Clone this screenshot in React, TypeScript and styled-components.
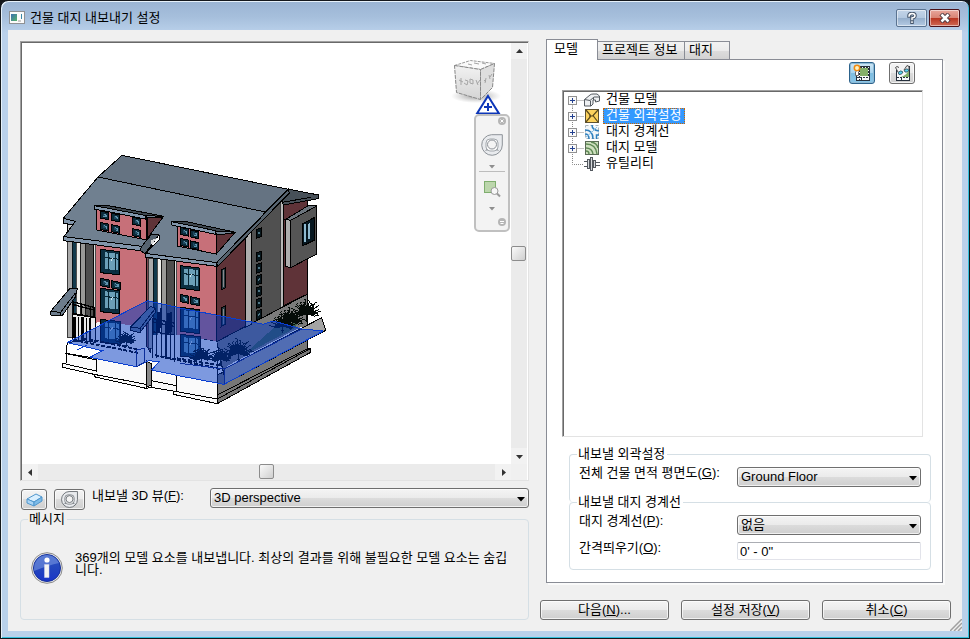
import React from "react";
import styled, { createGlobalStyle, css } from "styled-components";

const GlobalStyle = createGlobalStyle`
  *, *::before, *::after { box-sizing: border-box; }
  html, body { margin: 0; background: #14181c; }
  body, button, select, input {
    font-family: "Liberation Sans", "Noto Sans CJK KR", sans-serif;
    font-size: 13px;
    line-height: 16px;
    color: #000;
  }
  svg { display: block; }
  button { padding: 0; margin: 0; }
`;

const bevel = css`
  border: 1px solid #6f6f6f;
  border-radius: 3px;
  background: linear-gradient(#f4f4f4 0%, #ebebeb 48%, #dcdcdc 50%, #cfcfcf 100%);
  box-shadow: inset 0 0 0 1px rgba(255, 255, 255, 0.7);
`;

/* ---------- window frame ---------- */

const Frame = styled.div`
  display: flex;
  flex-direction: column;
  min-height: 100vh;
  padding: 0 6px 7px;
  border: 1px solid #14181c;
  border-radius: 8px 8px 0 0;
  background: linear-gradient(#9ab4d3 0px, #a6bfdc 16px, #bad1eb 32px, #b9d1ea 100%);
  box-shadow: inset 1px 1px 0 #e6f1fa, inset -1px -1px 0 #35c0dc;
`;

const TitleBar = styled.header`
  display: flex;
  align-items: center;
  height: 29px;
  padding: 4px 3px 0 2px;
`;

const Title = styled.h1`
  flex: 1;
  margin: 0 0 0 5px;
  font-size: 13px;
  font-weight: 400;
  line-height: 16px;
`;

const CaptionButton = styled.button<{ $close?: boolean }>`
  display: grid;
  place-items: center;
  width: 31px;
  height: 18px;
  margin: 0 0 0 2px;
  border: 1px solid ${(p) => (p.$close ? "#4b1219" : "#5a7391")};
  border-radius: 2px;
  background: ${(p) =>
    p.$close
      ? "linear-gradient(#e8a79c 0%, #d98474 48%, #b8341f 50%, #cf6a55 100%)"
      : "linear-gradient(#c3d4e8 0%, #b3c8e0 48%, #94aecb 50%, #b4cae3 100%)"};
  box-shadow: inset 0 0 0 1px rgba(255, 255, 255, 0.5);
`;

const Body = styled.main`
  position: relative;
  flex: 1;
  display: grid;
  grid-template-columns: 509fr 411fr;
  gap: 11px;
  margin: 0 1px;
  padding: 0 11px 11px 12px;
  background: #f0f0f0;
`;

const Column = styled.section<{ $top: number }>`
  display: flex;
  flex-direction: column;
  min-width: 0;
  padding-top: ${(p) => p.$top}px;
`;

const Grip = styled.svg`
  position: absolute;
  right: 0;
  bottom: 0;
`;

/* ---------- 3D view ---------- */

const sunken = css`
  border: 1px solid;
  border-color: #a0a0a0 #e3e3e3 #e3e3e3 #a0a0a0;
  box-shadow: inset 1px 1px 0 #696969;
`;

const Viewer = styled.div`
  ${sunken}
  flex: 1;
  display: grid;
  grid-template-columns: 1fr 16px;
  grid-template-rows: 1fr 16px;
  padding: 1px 1px 0 1px;
  background: #fff;
`;

const Canvas = styled.div`
  position: relative;
  padding: 102px 0 0 18px;
  overflow: hidden;
`;

const NavCluster = styled.div`
  position: absolute;
  top: 15px;
  right: 0;
  display: flex;
  flex-direction: column;
  align-items: center;
  width: 64px;
`;

const NavBar = styled.div`
  display: flex;
  flex-direction: column;
  align-items: center;
  align-self: flex-end;
  width: 36px;
  height: 118px;
  margin: 0 1px 0 0;
  border: 2px solid #c0c0c0;
  border-radius: 5px;
  background: #f3f3f3;
`;

const NavButton = styled.button<{ $h: number; $end?: boolean }>`
  display: grid;
  place-items: center;
  align-self: ${(p) => (p.$end ? "flex-end" : "center")};
  width: ${(p) => (p.$end ? 12 : 26)}px;
  height: ${(p) => p.$h}px;
  border: 0;
  background: none;
`;

const NavRule = styled.hr`
  width: 26px;
  height: 1px;
  margin: 1px 0 2px;
  border: 0;
  background: #bdbdbd;
`;

const Track = styled.div<{ $vertical?: boolean }>`
  display: flex;
  flex-direction: ${(p) => (p.$vertical ? "column" : "row")};
  align-items: stretch;
  background: #ebebeb;
`;

const TrackSpace = styled.div<{ $grow: number }>`
  flex: ${(p) => p.$grow} 1 0;
`;

const TrackButton = styled.button`
  display: grid;
  place-items: center;
  width: 16px;
  height: 16px;
  border: 0;
  background: #f2f2f2;
`;

const Thumb = styled.div`
  width: 15px;
  height: 15px;
  border: 1px solid #8c8c8c;
  border-radius: 2px;
  background: linear-gradient(135deg, #fafafa, #cfcfcf);
`;

const Corner = styled.div`
  background: #f0f0f0;
`;

const ViewRow = styled.div`
  display: flex;
  align-items: flex-start;
  height: 21px;
  margin-top: 7px;
  padding-left: 1px;
`;

const SmallButton = styled.button<{ $w: number }>`
  ${bevel}
  display: grid;
  place-items: center;
  width: ${(p) => p.$w}px;
  height: 21px;
  margin: 1px 7px 0 0;
`;

const ViewLabel = styled.label`
  width: 118px;
`;

/* ---------- form parts ---------- */

const SelectBox = styled.div`
  position: relative;
  flex: 1;
  display: flex;
  min-width: 0;
`;

const Select = styled.select`
  ${bevel}
  appearance: none;
  width: 100%;
  height: 20px;
  margin: 0;
  padding: 0 20px 0 3px;
  line-height: 16px;
`;

const SelectArrow = styled.svg`
  position: absolute;
  right: 4px;
  top: 9px;
  pointer-events: none;
`;

const TextInput = styled.input`
  width: 100%;
  height: 18px;
  padding: 0 2px;
  border: 1px solid;
  border-color: #abadb3 #e2e3ea #e2e3ea #dbdfe6;
  border-radius: 2px;
  background: #fff;
`;

const Group = styled.fieldset<{ $open?: boolean; $joined?: boolean }>`
  min-width: 0;
  margin: ${(p) => (p.$joined ? "-8px" : "0")} 0 0;
  padding: 0 9px ${(p) => (p.$open ? 15 : 9)}px;
  border: 1px solid #d5dfe5;
  border-bottom-width: ${(p) => (p.$open ? 0 : 1)}px;
  border-radius: 4px;
`;

const Legend = styled.legend`
  height: 16px;
  margin-left: -2px;
  padding: 0 2px 0 1px;
  line-height: 16px;
`;

const Fields = styled.div`
  display: grid;
  grid-template-columns: 158px 1fr;
  row-gap: 7px;
  padding-top: 5px;
`;

const FieldLabel = styled.label`
  line-height: 12px;
`;

const MessageGroup = styled(Group)`
  height: 109px;
  margin-top: 2px;
`;

const Message = styled.div`
  display: flex;
  align-items: flex-start;
  gap: 12px;
  padding: 25px 6px 0 1px;
`;

const MessageText = styled.p`
  flex: 1;
  margin: 0;
  line-height: 12px;
  word-break: break-all;
`;

/* ---------- settings side ---------- */

const TabArea = styled.div`
  flex: 1;
  display: flex;
  flex-direction: column;
  padding: 0 8px 0 6px;
`;

const TabList = styled.div`
  display: flex;
  align-items: flex-end;
  height: 21px;
`;

const Tab = styled.button<{ $active?: boolean; $w: number }>`
  width: ${(p) => p.$w}px;
  height: ${(p) => (p.$active ? 21 : 19)}px;
  padding: 0 0 2px ${(p) => (p.$active ? 7 : 4)}px;
  border: 1px solid #898c95;
  border-left-width: ${(p) => (p.$active ? 1 : 0)}px;
  border-bottom: ${(p) => (p.$active ? "0" : "1px solid #898c95")};
  background: ${(p) =>
    p.$active ? "#fff" : "linear-gradient(#f2f2f2 0%, #ebebeb 50%, #dddddd 52%, #d2d2d2 100%)"};
  text-align: left;
  white-space: nowrap;
  z-index: 1;
`;

const Panel = styled.div`
  flex: 1;
  display: flex;
  flex-direction: column;
  margin-top: -1px;
  padding: 2px 11px 12px 15px;
  border: 1px solid #898c95;
  background: #fff;
  box-shadow: 2px 2px 0 #fafafa;
`;

const Toolbar = styled.div`
  display: flex;
  justify-content: flex-end;
  gap: 14px;
  margin-bottom: 6px;
  padding-right: 16px;
`;

const ToolButton = styled.button<{ $on?: boolean }>`
  ${bevel}
  display: grid;
  place-items: center;
  width: 26px;
  height: 22px;
  ${(p) =>
    p.$on &&
    css`
      border-color: #2c628b;
      background: linear-gradient(#cfe7f6 0%, #a9d4ee 48%, #7dbde1 50%, #8ac6e8 100%);
      box-shadow: inset 0 0 0 1px #8ebbd6;
    `}
`;

const Tree = styled.ul`
  ${sunken}
  flex: 1;
  margin: 0 8px 9px 0;
  padding: 1px 0 0 4px;
  list-style: none;
`;

const TreeRow = styled.li`
  display: flex;
  align-items: center;
  height: 16px;
`;

const TreeLabel = styled.span<{ $selected?: boolean }>`
  height: 16px;
  margin-left: 3px;
  padding: 0 3px 0 2px;
  line-height: 12px;
  border: 1px dotted ${(p) => (p.$selected ? "#cc6600" : "transparent")};
  background: ${(p) => (p.$selected ? "#3399ff" : "transparent")};
  color: ${(p) => (p.$selected ? "#fff" : "#000")};
`;

const GroupStack = styled.div`
  margin-left: 7px;
`;

const Actions = styled.div`
  display: grid;
  grid-template-columns: repeat(3, 1fr);
  gap: 12px;
  margin-top: 17px;
`;

const ActionButton = styled.button`
  ${bevel}
  height: 20px;
  line-height: 16px;
`;

/* ---------- icons ---------- */

const AppIcon = () => (
  <svg width="16" height="14" viewBox="0 0 16 14" aria-hidden="true">
    <defs>
      <linearGradient id="app" x1="0" y1="0" x2="1" y2="1">
        <stop offset="0" stopColor="#3a6fb0" />
        <stop offset="1" stopColor="#57b36a" />
      </linearGradient>
    </defs>
    <rect x=".5" y=".5" width="15" height="12" fill="#fbfbfb" stroke="#8f9193" />
    <rect x="2" y="3" width="6" height="7" fill="url(#app)" />
    <rect x="9" y="9" width="3" height="2" fill="#ccc" />
    <rect x="12" y="3" width="1" height="5" fill="#3a8aa8" />
  </svg>
);

const Ring = ({ size = 22, dark }: { size?: number; dark?: boolean }) => (
  <svg width={size} height={size} viewBox="0 0 22 22" fill="none" stroke={dark ? "#50565d" : "#8d9298"} aria-hidden="true">
    <path d="M10.500.7H21.300V11A10.300 10.300 0 1 1 10.500.7Z" fill="#e9ebee" />
    <rect x="5" y="5" width="12" height="12" rx="4" fill="#f8f8f8" stroke={dark ? "#6b7178" : "#a3a8ad"} />
    <circle cx="11" cy="10.500" r="4.500" fill="#f4f4f4" />
    <path d="m4.500 17 2-2m11 2-2-2" />
  </svg>
);

const RegionZoom = () => (
  <svg width="18" height="18" viewBox="0 0 18 18" aria-hidden="true">
    <rect x="1.500" y="1.500" width="11" height="11" fill="#bcd6ac" stroke="#7fae6e" />
    <circle cx="11.500" cy="11" r="3.500" fill="#f7f7f7" stroke="#999" />
    <path d="m14 13.500 3 3" stroke="#999" strokeWidth="2" />
  </svg>
);

const Caret = ({ dir, color = "#333" }: { dir: "up" | "down" | "left" | "right"; color?: string }) => {
  const d = {
    up: "M1 6 4.500 2 8 6Z",
    down: "M1 3 8 3 4.500 7Z",
    left: "M6 1 2 4.500 6 8Z",
    right: "M3 1 7 4.500 3 8Z",
  }[dir];
  return (
    <svg width="9" height="9" viewBox="0 0 9 9" aria-hidden="true">
      <path d={d} fill={color} />
    </svg>
  );
};

const SmallCaret = () => (
  <svg width="6" height="4" viewBox="0 0 6 4" aria-hidden="true">
    <path d="M0 0H6L3 3.500Z" fill="#8f8f8f" />
  </svg>
);

const NavDot = ({ cross }: { cross?: boolean }) => (
  <svg width="8" height="8" viewBox="0 0 8 8" stroke="#fff" aria-hidden="true">
    <circle cx="4" cy="4" r="4" fill="#b5b5b5" stroke="none" />
    {cross ? <path d="m2.500 2.500 3 3m0-3-3 3" /> : <path d="M2 3.500h4M2.500 5.500h3" />}
  </svg>
);

const ViewCube = () => (
  <svg width="64" height="56" viewBox="447 58 64 56" aria-label="ViewCube">
    <defs>
      <radialGradient id="cubeShade">
        <stop offset="0" stopColor="#777" stopOpacity=".75" />
        <stop offset="1" stopColor="#999" stopOpacity="0" />
      </radialGradient>
      <linearGradient id="cubeFace" x1="0" y1="0" x2="0" y2="1">
        <stop offset="0" stopColor="#f2f2f2" />
        <stop offset="1" stopColor="#d4d4d4" />
      </linearGradient>
    </defs>
    <ellipse cx="476" cy="96" rx="25" ry="7" fill="url(#cubeShade)" />
    <path d="m454.500 65.500 16-5 24 3-14 6Z" fill="#fafafa" stroke="#999" strokeDasharray="3 1" />
    <path d="m454.500 65.500 26 4v30l-24-7Z" fill="url(#cubeFace)" stroke="#888" strokeDasharray="4 1" />
    <path d="m480.500 69.500 14-6-2 24-12 12Z" fill="#dedede" stroke="#888" strokeDasharray="4 1" />
    <path
      d="m459 80 4 2m-2-4v7m4-5 3 1-1 4-3-2m6-4 3 1v4l-3-1zm6 1 2 5m2-5-3 4m7-4 2 2m0-4-1 5m4-8 1 4m2-5-2 3M468 64l4 1m2-2 5 1m3-1 4 1"
      fill="none"
      stroke="#a5a5a5"
    />
    <path d="M488 96 499 113.500H477Z" fill="#fff" stroke="#0d36b8" strokeWidth="2" />
    <path d="M476 113.500h24" stroke="#0d36b8" />
    <path d="M488 103v8m-4-4h8" stroke="#0d36b8" strokeWidth="2" />
  </svg>
);

const Block = () => (
  <svg width="17" height="14" viewBox="0 0 17 14" stroke="#4f96cd" strokeLinejoin="round" aria-hidden="true">
    <path d="m1 6 9-5 6 3-8 5Z" fill="#d9efff" />
    <path d="m1 6 7 3v4L1 10Z" fill="#a9d4f5" />
    <path d="m8 9 8-5v4l-8 5Z" fill="#7dbbe8" />
  </svg>
);

const InfoIcon = () => (
  <svg width="32" height="32" viewBox="0 0 32 32" aria-hidden="true">
    <defs>
      <linearGradient id="info" x1="0" y1="0" x2="0" y2="1">
        <stop offset="0" stopColor="#2d55c4" />
        <stop offset=".5" stopColor="#2346bd" />
        <stop offset="1" stopColor="#1a35c9" />
      </linearGradient>
    </defs>
    <circle cx="16" cy="16" r="15.300" fill="#e8e8e8" stroke="#8b8b8b" />
    <circle cx="16" cy="16" r="13.500" fill="url(#info)" stroke="#15309b" />
    <path d="M3 16A13 13 0 0 1 28 11Q18 13 3 19Z" fill="#7d9ae2" opacity=".55" />
    <circle cx="16" cy="8" r="2.600" fill="#fff" />
    <path d="M13.500 12.500h4.500v13h-4.500z" fill="#f4f4f4" stroke="#d0d5ea" strokeWidth=".5" />
  </svg>
);

const SheetIcon = ({ spark }: { spark?: boolean }) => (
  <svg width="18" height="18" viewBox="0 0 18 18" fill="none" aria-hidden="true">
    <rect x="3.500" y="2.500" width="13" height="14" fill="#f6f8fa" stroke="#26303c" />
    {spark ? (
      <rect x="7" y="4" width="8" height="8" fill="#84b06a" />
    ) : (
      <path d="M16 6v7H8q6-2 8-7Z" fill="#84b06a" />
    )}
    {spark && <path d="M6.500 3v13M7 3.500h9M15.500 4v8" stroke="#26303c" strokeDasharray="2 1" />}
    <path d="M4 13.500h12M8.500 14v3" stroke="#26303c" strokeDasharray="2 1" />
    {spark ? (
      <>
        <circle cx="4" cy="4" r="2.700" fill="#fff3c0" stroke="#f08a12" strokeWidth="1.500" />
        <path d="M2.500 7.500v4h3v-4" fill="#fff" stroke="#6a6a6a" />
      </>
    ) : (
      <>
        <rect x="2" y="1" width="14" height="5" fill="#f2f2f2" />
        <path d="M5 8 2.500 3.500 4 2.500l2 1M11 6l3-4.500 2 1V5" stroke="#4b4b4b" />
        <path d="M5 8.500q3-3 5-.5-1 3-4 2.500ZM11 6.500q3-3 5-.5-1 3-4 2Z" fill="#54d2ee" stroke="#29323c" strokeWidth=".7" />
      </>
    )}
  </svg>
);

const Branch = ({ leaf, first }: { leaf?: boolean; first?: boolean }) => (
  <svg width="17" height="16" viewBox="0 0 17 16" fill="none" aria-hidden="true">
    <path
      d={leaf ? "M5.500 0v8.500H17" : first ? "M5.500 8.500V16M5.500 8.500H17" : "M5.500 0V16M5.500 8.500H17"}
      stroke="#888"
      strokeDasharray="1 1"
    />
    {!leaf && (
      <>
        <rect x="1.500" y="4.500" width="8" height="8" fill="#fafafa" stroke="#919191" />
        <path d="M3 8.500h5M5.500 6v5" stroke="#23408f" />
      </>
    )}
  </svg>
);

const BuildingIcon = () => (
  <svg width="16" height="14" viewBox="0 0 16 14" stroke="#555b61" strokeLinejoin="round" aria-hidden="true">
    <path d="M.5 6.500 6 2q1-1 3-1h4l2.500 2v5l-4 1V7H9v4l-2 2H.5Z" fill="#eef0f2" />
    <path d="M.5 6.500 6 7.500l4-3.500h5.500M6.500 8v5M9.500 7V5" fill="none" />
  </svg>
);
const OutlineIcon = () => (
  <svg width="16" height="16" viewBox="0 0 16 16" aria-hidden="true">
    <rect x="1.500" y="1.500" width="13" height="13" fill="#fcd25e" stroke="#5d5132" />
    <path d="m2 2 5 6-5 6M14 2 9 7.500l5 6.500M5 8h5" fill="none" stroke="#5b4a1c" strokeWidth="1.200" />
  </svg>
);
const BoundaryIcon = () => (
  <svg width="16" height="16" viewBox="0 0 16 16" fill="none" aria-hidden="true">
    <rect x="1.500" y="1.500" width="13" height="13" fill="#f3f7fa" stroke="#a9b4bd" strokeDasharray="3 2" />
    <path d="M8 1q0 5 7 6M1 6q8 0 8 9M1 10q4 0 4 5M12.500 15v-4H15" stroke="#2f7fbd" strokeWidth="1.500" />
    <path d="m2 13 6-5 5-5" stroke="#8bbfe4" />
  </svg>
);
const SiteIcon = () => (
  <svg width="16" height="16" viewBox="0 0 16 16" fill="none" aria-hidden="true">
    <rect x="1.500" y="1.500" width="13" height="13" fill="#cfe0c0" stroke="#5a6b56" />
    <path d="M2 4q10 0 11 10M2 8q6 0 7 6M2 11q3 0 3 3M7 2q6 1 7 6" stroke="#5f8a55" strokeWidth="1.400" />
  </svg>
);
const UtilityIcon = () => (
  <svg width="16" height="16" viewBox="0 0 16 16" fill="#d7dadd" stroke="#54595f" aria-hidden="true">
    <path d="M0 5.500h4M0 10.500h4M11 6.500h5M11 9.500h5" />
    <rect x="3.500" y="3.500" width="2" height="9" />
    <rect x="6.500" y="1.500" width="2" height="13" />
    <rect x="9.500" y="4.500" width="2" height="7" />
  </svg>
);

/* ---------- building drawing, three units per screen pixel ---------- */

type Pt = [number, number];

const Pane = ({ at: [x, y], w, h }: { at: Pt; w: number; h: number }) => (
  <g>
    <path d={`M${x} ${y}l${w} 5v${h}l${-w} -5Z`} fill="#0c2b3a" />
    <path d={`M${x + 8} ${y + 7}l${w - 12} 4v${h - 13}l${12 - w} -3Z`} fill="#5f93ad" stroke="none" />
    <path d={`M${x + 8} ${y + 7}v${h - 12}l9 0Z`} fill="#1f4a60" stroke="none" />
  </g>
);

const Casement = ({ at: [x, y], w, h }: { at: Pt; w: number; h: number }) => (
  <g>
    <path d={`M${x} ${y}l${w} 7v${h}l${-w} -7Z`} fill="#0b2f42" />
    <path d={`M${x + 13} ${y + 9}l${w - 18} 4v${h - 20}l${18 - w} -4Z`} fill="#6b9fb8" stroke="none" />
    <path
      d={`M${x + 24} ${y + 8}v${h - 12}M${x + 45} ${y + 10}v${h - 12}M${x + 12} ${y + 24}l${w - 14} 6`}
      fill="none"
      stroke="#082635"
    />
    <path d={`M${x + 30} ${y + h - 34}l6 -10`} stroke="#cfe6ef" fill="none" />
  </g>
);

const Shrub = ({ at: [x, y], r }: { at: Pt; r: number }) => {
  let d = "";
  for (let i = 0; i < 26; i++) {
    const a = Math.PI * (0.9 + (i * 1.2) / 25);
    const len = r * (0.6 + ((i * 7) % 5) * 0.1);
    const ex = Math.round(x + Math.cos(a) * len);
    const ey = Math.round(y + Math.sin(a) * len);
    d += `M${x} ${y}L${ex} ${ey}l${i % 2 ? 6 : -6} ${-3}M${Math.round((x + ex) / 2)} ${Math.round((y + ey) / 2)}l${
      i % 3 ? 9 : -9
    } -6`;
  }
  return <path d={d + `M${x} ${y}v${Math.round(r * 0.6)}m-5 -6h10`} fill="none" stroke="#050c08" />;
};

const Strips = ({ x, y, h }: { x: number; y: number; h: number }) => (
  <g strokeWidth="2">
    <rect x={x} y={y} width="15" height={h} fill="#aaa" />
    <rect x={x + 15} y={y} width="12" height={h} fill="#123a4c" />
    <rect x={x + 27} y={y} width="13" height={h} fill="#f0f0ec" />
    <rect x={x + 40} y={y} width="13" height={h} fill="#9a9a98" />
    <rect x={x + 53} y={y} width="26" height={h} fill="#4e4e4e" />
    <rect x={x + 79} y={y} width="6" height={h} fill="#ddd" />
  </g>
);

const House = () => (
  <svg width="300" height="265" viewBox="0 0 900 795" stroke="#000" strokeWidth="3" shapeRendering="crispEdges" role="img" aria-label="3D perspective">
    {/* base and retaining walls */}
    <path d="M82 593 78 655H68V667L162 688V695L318 730 333 727 400 738V748L532 776 532 640 322 560Z" fill="#fafafa" />
    <path d="M532 690 803 560V612L812 610V622L532 776Z" fill="#777" />
    <path d="M68 655 168 678M162 688 318 718M75 625 170 645V680M318 645V730M333 680V727M318 718 333 711M400 738 532 762M333 707 410 722M410 690V738M532 720V776M532 750 800 612M532 762 812 610" fill="none" />
    <path d="M318 648 333 655V720L318 728Z" fill="#888" />
    <path d="M635 535 803 447V560L552 690 530 590Z" fill="#7b7b7b" />
    <path d="M552 672 845 518 857 556 552 718Z" fill="#a3a3a3" />
    <path d="M560 665 785 546" stroke="#fff" fill="none" />
    <path d="M610 630 760 552 775 535 720 532Z" fill="#42634d" stroke="none" />

    {/* side walls */}
    <path d="M530 360 615 270V545L530 590Z" fill="#5f3338" />
    <path d="M615 270 635 250V537L615 547Z" fill="#adadad" />
    <path d="M635 250 727 162V487L635 535Z" fill="#505050" />
    <path d="M721 168 729 164V485L721 489Z" fill="#b8b8b8" strokeWidth="2" />
    <path d="M730 176 803 165V447L730 483Z" fill="#5f3338" />
    {[250, 320, 355, 390, 425, 460, 495].map((y) => (
      <g key={y}>
        <path d={`M648 ${y + 4}l17 -6v26l-17 6Z`} fill="#07161c" />
        <path d={`M653 ${y + 12}l6 -2v6l-6 2Z`} fill="#4f7686" stroke="none" />
      </g>
    ))}
    <path d="M543 374 556 369V428L543 435ZM543 489 556 483V538L543 545Z" fill="#253940" />
    <path d="M550 376V426M550 491V537" stroke="#8a8a8a" />
    <path d="M737 223 808 180 830 183 752 226Z" fill="#6c757d" />
    <path d="M737 223 752 226V368L737 364Z" fill="#adadad" />
    <path d="M752 226 830 183V327L752 368Z" fill="#555" />
    <path d="M787 237 824 217V285L787 303Z" fill="#061720" />
    <path d="M791 239 799 235V289L791 293ZM804 238 811 234V280L804 284Z" fill="#8fb9cf" stroke="none" />

    {/* roof */}
    <path d="M690 122 836 150 834 161 730 180 725 163Z" fill="#475058" />
    <path d="M727 172 812 157" fill="none" />
    <path d="M246 31 745 133 677 201 174 96Z" fill="#657382" />
    <path d="M174 96 677 201 530 353 315 325 357 285 357 270 335 268 305 304 72 275 105 230 70 220Z" fill="#708090" />
    <path d="M70 220 105 229 98 240 70 234Z" fill="#8296ab" />
    <path d="M82 237 98 240 82 262Z" fill="#ccc" />
    <path d="M745 133 748 144 533 364 530 353Z" fill="#56636f" />

    {/* front of the left house */}
    <path d="M165 298 318 318V600L165 560Z" fill="#c77079" />
    <Strips x={82} y={288} h={290} />
    <path d="M318 318 330 330V620L318 600Z" fill="#7b4950" />
    <path d="M72 275 305 304 300 317 70 287Z" fill="#8296ab" />
    <path d="M305 304 335 268 357 270 315 325 300 317Z" fill="#56636f" />
    <path d="M333 285 351 280 335 300Z" fill="#d8d8d8" stroke="none" />
    <Casement at={[182, 313]} w={57} h={70} />
    <Pane at={[182, 400]} w={25} h={22} />
    <Pane at={[215, 407]} w={25} h={22} />
    <Casement at={[182, 430]} w={57} h={70} />
    <path d="M170 192 320 215V285L170 255Z" fill="#c77079" />
    <path d="M322 218 368 218 322 280Z" fill="#5f3338" />
    <path d="M163 182 195 180 372 214 315 212Z" fill="#3e474f" />
    <path d="M163 182 315 211V222L163 192Z" fill="#8296ab" />
    {[[180, 198], [215, 205], [277, 217], [180, 232], [215, 239], [277, 251]].map(([x, y]) => (
      <Pane key={`${x}-${y}`} at={[x, y]} w={24} h={21} />
    ))}

    {/* front of the right house */}
    <path d="M410 340 530 358V590L410 570Z" fill="#c77079" />
    <Strips x={325} y={340} h={270} />
    <path d="M315 325 530 353V364L315 336Z" fill="#8296ab" />
    <Casement at={[420, 362]} w={58} h={68} />
    <Pane at={[420, 448]} w={25} h={22} />
    <Pane at={[452, 455]} w={25} h={22} />
    <Casement at={[420, 487]} w={58} h={72} />
    <path d="M412 243 528 265V327L412 303Z" fill="#c77079" />
    <path d="M530 268 582 266 530 326Z" fill="#5f3338" />
    <path d="M395 230 430 228 587 262 527 258Z" fill="#3e474f" />
    <path d="M395 230 527 257V268L395 240Z" fill="#8296ab" />
    {[[420, 247], [452, 255], [420, 280], [452, 288]].map(([x, y]) => (
      <Pane key={`${x}-${y}`} at={[x, y]} w={24} h={21} />
    ))}

    {/* ground floor, balconies and canopies */}
    <path d="M170 530 318 545V605L290 610 165 590Z" fill="#f4f4f4" stroke="none" />
    <path d="M410 570 530 590V665L335 640V570Z" fill="#f4f4f4" stroke="none" />
    <path d="M97 508 165 518V592L97 583Z" fill="#e9e9e9" />
    <path d="M103 515V580M127 516V585M150 518V588" strokeWidth="7" />
    <path d="M115 515V585M140 518V587" />
    <path d="M97 470 165 488M97 478 165 496M97 505 165 517M100 470V510M124 475V512M152 485V518M163 485V520" fill="none" strokeWidth="4" />
    <Casement at={[182, 523]} w={60} h={68} />
    <Casement at={[420, 568]} w={60} h={65} />
    <path d="M335 520 405 535M335 530 405 545M335 560 405 570M338 520V640M350 525V640M364 525V640M378 530V642M392 530V645M404 535V650" fill="none" strokeWidth="4" />
    <path d="M355 500V560M362 490V550M385 505V565M392 500V560" fill="none" strokeWidth="7" />
    <path d="M88 432 112 430 106 456 66 513 32 510V499Z" fill="#6c7c8c" />
    <path d="M32 499 62 502 106 444M62 502V513" fill="none" />
    <path d="M332 484 346 490V502L300 563 272 556V546Z" fill="#6c7c8c" />
    <path d="M272 546 300 550 346 490M300 550V563" fill="none" />

    {/* planting */}
    <path d="M100 585 300 625M130 580 290 612M345 630 540 672M410 640 545 662" fill="none" strokeWidth="6" strokeDasharray="12 5" />
    <Shrub at={[258, 590]} r={27} />
    <Shrub at={[485, 640]} r={32} />
    <Shrub at={[542, 643]} r={32} />
    <Shrub at={[595, 625]} r={42} />
    <Shrub at={[728, 543]} r={34} />
    <Shrub at={[752, 530]} r={42} />
    <Shrub at={[800, 506]} r={42} />

    {/* selected site slab */}
    <path
      d="M322 467 420 489 670 538 700 528 785 552 850 558 552 718 420 693 335 675 357 650 325 647 290 665 150 637 187 617 82 593 210 525Z"
      fill="#0038c4"
      fillOpacity=".5"
      stroke="#0a3fd0"
    />
    <path d="M187 617 82 593 78 625 150 637Z" fill="#fff" stroke="none" />
    <path d="M82 593 78 625 150 637" fill="none" />
    <path d="M82 593 187 617 150 637M110 615 140 600M325 647 357 650 335 675" fill="none" stroke="#0a3fd0" />
    <path d="M290 615 312 610V652L290 665ZM552 672V718M552 672 785 552M420 655 552 672" fill="none" stroke="#0b2e9a" />
  </svg>
);

/* ---------- page ---------- */

const DropDown = ({ id, value }: { id: string; value: string }) => (
  <SelectBox>
    <Select id={id} defaultValue={value}>
      <option>{value}</option>
    </Select>
    <SelectArrow width="8" height="5" viewBox="0 0 8 5" aria-hidden="true">
      <path d="M0 0H8L4 4.500Z" fill="#000" />
    </SelectArrow>
  </SelectBox>
);

const treeItems = [
  { label: "건물 모델", Icon: BuildingIcon },
  { label: "건물 외곽설정", Icon: OutlineIcon, selected: true },
  { label: "대지 경계선", Icon: BoundaryIcon },
  { label: "대지 모델", Icon: SiteIcon },
  { label: "유틸리티", Icon: UtilityIcon, leaf: true },
];

export default function App() {
  return (
    <>
      <GlobalStyle />
      <Frame>
        <TitleBar>
          <AppIcon />
          <Title>건물 대지 내보내기 설정</Title>
          <CaptionButton aria-label="도움말">
            <svg width="10" height="12" viewBox="0 0 10 12" fill="none" strokeLinecap="square" aria-hidden="true">
              <path d="M2 4q0-2.500 3-2.500t3 2.300Q8 5.500 5 6v1.500M5 10v.2" stroke="#46566b" strokeWidth="3.500" />
              <path d="M2 4q0-2.500 3-2.500t3 2.300Q8 5.500 5 6v1.500M5 10v.2" stroke="#fff" strokeWidth="1.500" />
            </svg>
          </CaptionButton>
          <CaptionButton $close aria-label="닫기">
            <svg width="12" height="10" viewBox="0 0 12 10" fill="none" aria-hidden="true">
              <path d="m2 1 8 8m0-8-8 8" stroke="#4d3a42" strokeWidth="4.500" />
              <path d="m2.500 1.500 7 7m0-7-7 7" stroke="#fff" strokeWidth="2.500" />
            </svg>
          </CaptionButton>
        </TitleBar>

        <Body>
          <Column $top={11}>
            <Viewer>
              <Canvas>
                <House />
                <NavCluster>
                  <ViewCube />
                  <NavBar>
                    <NavButton $h={10} $end aria-label="닫기"><NavDot cross /></NavButton>
                    <NavButton $h={38} aria-label="탐색 휠"><Ring /></NavButton>
                    <NavButton $h={6} aria-label="휠 옵션"><SmallCaret /></NavButton>
                    <NavRule />
                    <NavButton $h={30} aria-label="영역 줌"><RegionZoom /></NavButton>
                    <NavButton $h={10} aria-label="줌 옵션"><SmallCaret /></NavButton>
                    <NavButton $h={16} $end aria-label="사용자화"><NavDot /></NavButton>
                  </NavBar>
                </NavCluster>
              </Canvas>
              <Track $vertical>
                <TrackButton aria-label="위로"><Caret dir="up" /></TrackButton>
                <TrackSpace $grow={187} />
                <Thumb />
                <TrackSpace $grow={187} />
                <TrackButton aria-label="아래로"><Caret dir="down" /></TrackButton>
              </Track>
              <Track>
                <TrackButton aria-label="왼쪽으로"><Caret dir="left" /></TrackButton>
                <TrackSpace $grow={220} />
                <Thumb />
                <TrackSpace $grow={220} />
                <TrackButton aria-label="오른쪽으로"><Caret dir="right" /></TrackButton>
              </Track>
              <Corner />
            </Viewer>

            <ViewRow>
              <SmallButton $w={26} aria-label="3D 블록"><Block /></SmallButton>
              <SmallButton $w={31} aria-label="탐색"><Ring size={17} dark /></SmallButton>
              <ViewLabel htmlFor="view">내보낼 3D 뷰(<u>F</u>):</ViewLabel>
              <DropDown id="view" value="3D perspective" />
            </ViewRow>

            <MessageGroup>
              <Legend>메시지</Legend>
              <Message>
                <InfoIcon />
                <MessageText>
                  369개의 모델 요소를 내보냅니다. 최상의 결과를 위해 불필요한 모델 요소는 숨깁니다.
                </MessageText>
              </Message>
            </MessageGroup>
          </Column>

          <Column $top={9}>
            <TabArea>
              <TabList role="tablist">
                <Tab role="tab" aria-selected $active $w={52}>모델</Tab>
                <Tab role="tab" $w={87}>프로젝트 정보</Tab>
                <Tab role="tab" $w={45}>대지</Tab>
              </TabList>
              <Panel role="tabpanel">
                <Toolbar>
                  <ToolButton $on aria-label="새 항목 표시"><SheetIcon spark /></ToolButton>
                  <ToolButton aria-label="미리보기"><SheetIcon /></ToolButton>
                </Toolbar>
                <Tree>
                  {treeItems.map(({ label, Icon, selected, leaf }, i) => (
                    <TreeRow key={label}>
                      <Branch leaf={leaf} first={i === 0} />
                      <Icon />
                      <TreeLabel $selected={selected}>{label}</TreeLabel>
                    </TreeRow>
                  ))}
                </Tree>
                <GroupStack>
                  <Group $open>
                    <Legend>내보낼 외곽설정</Legend>
                    <Fields>
                      <FieldLabel htmlFor="plan">전체 건물 면적 평면도(<u>G</u>):</FieldLabel>
                      <DropDown id="plan" value="Ground Floor" />
                    </Fields>
                  </Group>
                  <Group $joined>
                    <Legend>내보낼 대지 경계선</Legend>
                    <Fields>
                      <FieldLabel htmlFor="line">대지 경계선(<u>P</u>):</FieldLabel>
                      <DropDown id="line" value="없음" />
                      <FieldLabel htmlFor="offset">간격띄우기(<u>O</u>):</FieldLabel>
                      <TextInput id="offset" defaultValue={`0' - 0"`} />
                    </Fields>
                  </Group>
                </GroupStack>
              </Panel>
            </TabArea>
            <Actions>
              <ActionButton>다음(<u>N</u>)...</ActionButton>
              <ActionButton>설정 저장(<u>V</u>)</ActionButton>
              <ActionButton>취소(<u>C</u>)</ActionButton>
            </Actions>
          </Column>

          <Grip width="12" height="12" viewBox="0 0 12 12" stroke="#a0a0a0" aria-hidden="true">
            <path d="M0 12 12 0M4 12l8-8M8 12l4-4" strokeWidth="1.500" />
          </Grip>
        </Body>
      </Frame>
    </>
  );
}
